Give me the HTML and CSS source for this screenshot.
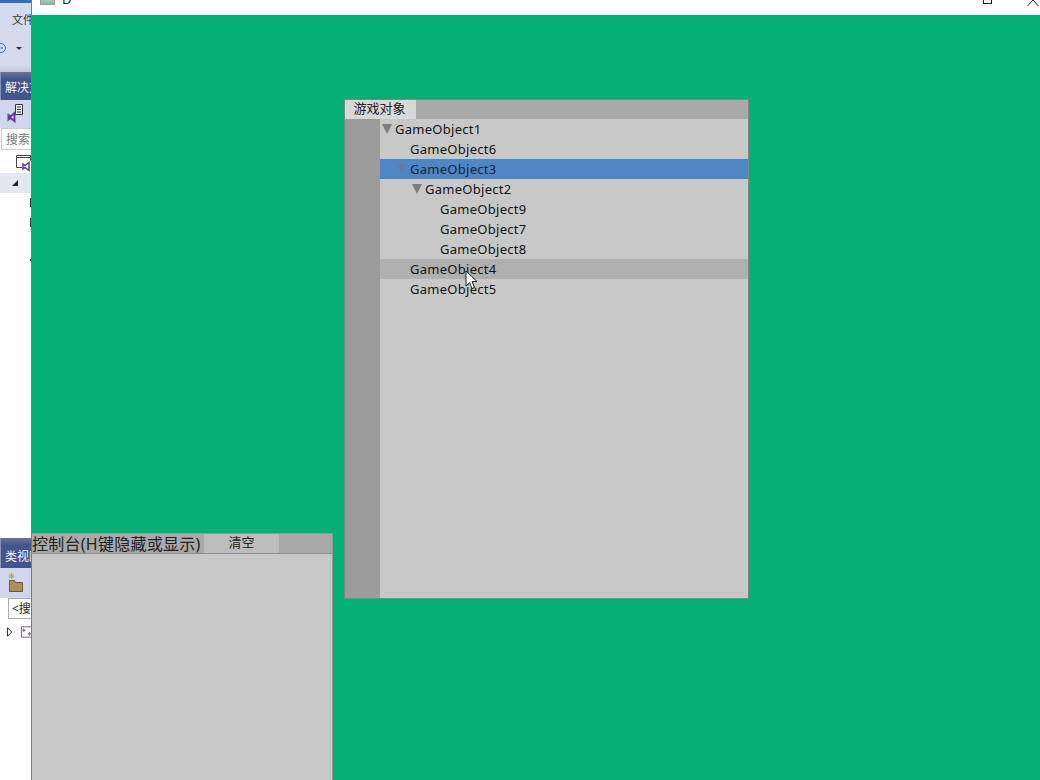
FILE: index.html
```html
<!DOCTYPE html>
<html lang="zh">
<head>
<meta charset="utf-8">
<title>Game</title>
<link rel="stylesheet" href="styles.css">
</head>
<body>
<div class="ide">
  <div class="ide-top"></div>
  <div class="ide-menu"><span class="menu-text">文件</span></div>
  <div class="ide-tools">
    <svg class="i-back" width="8" height="12" viewBox="0 0 8 12"><circle cx="1" cy="6" r="4.500" fill="none" stroke="#3a6ea5"/><path d="M-1 6h4" stroke="#3a6ea5"/></svg>
    <svg class="i-caret" width="6" height="4" viewBox="0 0 6 4"><path d="M0 0h6L3 3z" fill="#333"/></svg>
  </div>
  <div class="pane-title"><span>解决方</span></div>
  <div class="pane-tools">
    <svg width="20" height="20" viewBox="0 0 20 20"><path d="M9.500 1.500h7v10h-7z" fill="#e8ecf8" stroke="#333"/><path d="M11 4h4M11 6.500h4M11 9h4" stroke="#333"/><path d="M2.500 12l2 1.500 4-3.500v8l-4-3-2 1.500z" fill="none" stroke="#68389c" stroke-width="2"/></svg>
  </div>
  <div class="search"><span>搜索</span></div>
  <div class="tree-a">
    <svg width="20" height="18" viewBox="0 0 20 18"><path d="M1.500 1.500h14v2h-14zM1.500 3.500v10h6M15.500 3.500v3" fill="none" stroke="#444"/><path d="M8 10l2 1.500 4-3v8l-4-3-2 1.500z" fill="none" stroke="#68389c" stroke-width="1.500"/></svg>
  </div>
  <div class="tree-b"><svg width="8" height="8" viewBox="0 0 8 8"><path d="M7 1v6H1z" fill="#222"/></svg></div>
  <div class="tree-c"><i></i><i></i><i class="dash"></i></div>
  <div class="class-view">
    <div class="pane-title cv-title"><span>类视图</span></div>
    <div class="cv-tools">
      <svg width="20" height="22" viewBox="0 0 20 22"><path d="M2.500 8.500h5l1 2h7v9h-13z" fill="#ab9159" stroke="#6d5a36"/><path d="M4.500 1v6M1.500 4h6M2.500 2l4 4M6.500 2l-4 4" stroke="#c9a13a"/></svg>
    </div>
    <div class="cv-search"><span>&lt;搜</span></div>
    <div class="cv-tree">
      <svg width="6" height="10" viewBox="0 0 6 10"><path d="M.500.500l4.500 4.500-4.500 4.500z" fill="#fff" stroke="#222"/></svg>
      <svg width="12" height="12" viewBox="0 0 12 12"><path d="M.500.500h11v11H.500z" fill="#fff" stroke="#666"/><path d="M3 2v4M1 4h4" stroke="#8c4a9c"/><path d="M9 6v4M7 8h4" stroke="#8c4a9c"/></svg>
    </div>
  </div>
</div>

<div class="game">
  <div class="titlebar">
    <div class="app-icon"></div>
    <span class="app-name">D</span>
    <div class="max-btn"></div>
    <svg class="close-btn" width="12" height="6" viewBox="0 0 12 6"><path d="M.500 6L6 0M6 0l5.500 6" fill="none" stroke="#222"/></svg>
  </div>
  <div class="stage">
    <section class="objects">
      <div class="tabs"><div class="tab">游戏对象</div></div>
      <div class="obj-body">
        <div class="gutter"></div>
        <ul class="tree">
          <li class="row lv0"><svg class="arrow" width="10" height="10" viewBox="0 0 10 10"><path d="M0 0h10L5 10z"/></svg>GameObject1</li>
          <li class="row lv1">GameObject6</li>
          <li class="row lv1 selected"><svg class="arrow" width="10" height="10" viewBox="0 0 10 10"><path d="M0 0h10L5 10z"/></svg>GameObject3</li>
          <li class="row lv2"><svg class="arrow" width="10" height="10" viewBox="0 0 10 10"><path d="M0 0h10L5 10z"/></svg>GameObject2</li>
          <li class="row lv3">GameObject9</li>
          <li class="row lv3">GameObject7</li>
          <li class="row lv3">GameObject8</li>
          <li class="row lv1 hover">GameObject4</li>
          <li class="row lv1">GameObject5</li>
        </ul>
      </div>
      <svg class="cursor" width="13" height="20" viewBox="0 0 13 20"><path d="M1 1v15l3.500-3.500 2.500 6 2.500-1-2.500-6h5z" fill="#fff" stroke="#222" stroke-width="1"/></svg>
    </section>
    <section class="console">
      <div class="console-head">
        <div class="console-title">控制台(H键隐藏或显示)</div>
        <button class="clear">清空</button>
      </div>
    </section>
  </div>
</div>
</body>
</html>
```
FILE: styles.css
```css
* { box-sizing: border-box; }
html, body { margin: 0; padding: 0; height: 100%; overflow: hidden; }
body {
  position: relative;
  width: 1040px;
  height: 780px;
  font-family: "Noto Sans", "Noto Sans CJK SC", sans-serif;
  background: #fff;
  color: #1a1a1a;
}

/* Background IDE window, mostly covered */
.ide {
  position: absolute;
  left: 0;
  top: 0;
  width: 32px;
  height: 780px;
  overflow: hidden;
  display: flex;
  flex-direction: column;
  background: #fff;
}
.ide-top { height: 3px; background: #2f6fb5; flex: none; }
.ide-menu {
  height: 31px;
  flex: none;
  background: #d5dbee;
  font-size: 11px;
  line-height: 34px;
  padding-left: 12px;
  white-space: nowrap;
  color: #333;
}
.ide-tools {
  height: 38px;
  flex: none;
  background: linear-gradient(#d5dbee 80%, #c3c8d8);
  display: flex;
  align-items: flex-start;
  padding-top: 8px;
  gap: 5px;
}
.i-back { flex: none; }
.i-caret { flex: none; margin-top: 5px; margin-left: 3px; }
.pane-title {
  height: 28px;
  flex: none;
  background: linear-gradient(#6a7499, #43558f 25%, #43558f);
  color: #f2f4fa;
  font-size: 12px;
  line-height: 32px;
  padding-left: 4px;
  white-space: nowrap;
  border-left: 1px solid #8a93b8;
}
.pane-tools {
  height: 28px;
  flex: none;
  background: #cfd6ee;
  padding: 3px 0 0 6px;
}
.search {
  height: 22px;
  flex: none;
  background: #fff;
  border: 1px solid #ccc;
  border-right: 0;
  margin-left: 1px;
  font-size: 12px;
  line-height: 22px;
  padding-left: 4px;
  color: #777;
  white-space: nowrap;
}
.tree-a { height: 23px; flex: none; padding: 4px 0 0 15px; background: #fff; }
.tree-b { height: 20px; flex: none; background: #e4e7f0; padding: 6px 0 0 11px; line-height: 0; }
.tree-c {
  height: 345px;
  flex: none;
  background: #fff;
}
.tree-c i {
  display: block;
  width: 2px;
  height: 9px;
  margin: 0 0 11px 30px;
  background: #333;
}
.tree-c i:first-child { margin-top: 5px; }
.tree-c .dash { height: 2px; margin-top: 32px; }
.class-view { flex: 1; display: flex; flex-direction: column; background: #fff; }
.cv-title {
  height: 30px;
  line-height: 38px;
}
.cv-tools { height: 30px; flex: none; background: #cfd6ee; padding: 4px 0 0 7px; }
.cv-search {
  height: 21px;
  flex: none;
  margin-left: 8px;
  background: #fff;
  border: 1px solid #aab;
  border-right: 0;
  font-size: 12px;
  line-height: 19px;
  padding-left: 3px;
  white-space: nowrap;
}
.cv-tree { display: flex; align-items: center; gap: 8px; padding: 7px 0 0 7px; }

/* Game window */
.game {
  position: absolute;
  left: 31px;
  top: -15px;
  width: 1009px;
  height: 795px;
  display: flex;
  flex-direction: column;
  border-left: 1px solid #6f7f80;
}
.titlebar {
  height: 30px;
  flex: none;
  background: #fff;
  position: relative;
  overflow: hidden;
}
.app-icon {
  position: absolute;
  left: 8px;
  top: 7px;
  width: 15px;
  height: 13px;
  background: linear-gradient(#cfe3d8, #8eb8a4);
  border: 1px solid #999;
}
.app-name {
  position: absolute;
  left: 30px;
  top: 4px;
  font-size: 13px;
  line-height: 20px;
  color: #222;
}
.max-btn {
  position: absolute;
  left: 951px;
  top: 11px;
  width: 9px;
  height: 8px;
  border: 1px solid #222;
}
.close-btn { position: absolute; left: 995px; top: 15px; }
.stage {
  flex: 1;
  background: #05b077;
  position: relative;
}

.objects {
  position: absolute;
  left: 312px;
  top: 84px;
  width: 405px;
  height: 500px;
  border: 1px solid #7c8a86;
  background: #c8c8c8;
  display: flex;
  flex-direction: column;
}
.tabs { height: 19px; flex: none; background: #a9a9a9; display: flex; }
.tab {
  width: 71px;
  background: #d8d8d8;
  font-size: 13px;
  line-height: 17px;
  padding-right: 2px;
  text-align: center;
  color: #222;
}
.obj-body { flex: 1; display: flex; min-height: 0; }
.gutter { width: 35px; flex: none; background: #9b9b9b; }
.tree { flex: 1; margin: 0; padding: 0; list-style: none; }
.row {
  height: 20px;
  display: flex;
  align-items: center;
  font-size: 13px;
  line-height: 20px;
  color: #141414;
  letter-spacing: 0.28px;
}
.arrow { flex: none; margin-right: 3px; fill: #7d7d7d; }
.lv0 { padding-left: 2px; }
.lv1 { padding-left: 30px; }
.lv2 { padding-left: 32px; }
.lv3 { padding-left: 60px; }
.selected { background: #4f86c6; color: #0e2440; padding-left: 17px; }
.selected .arrow { fill: #5f7fa8; }
.hover { background: #afafaf; }
.cursor { position: absolute; left: 120px; top: 170px; }

.console {
  position: absolute;
  left: 0;
  top: 518px;
  width: 301px;
  height: 262px;
  background: #c8c8c8;
  border-right: 1px solid #8a9a94;
  border-top: 1px solid #8a9a94;
}
.console-head {
  height: 20px;
  display: flex;
  background: #a9a9a9;
  border-bottom: 1px solid #8c8c8c;
}
.console-title {
  width: 172px;
  flex: none;
  font-size: 16px;
  line-height: 21px;
  letter-spacing: 0.25px;
  white-space: nowrap;
  color: #222;
}
.clear {
  width: 75px;
  margin: 0;
  padding: 0 0 2px;
  border: 0;
  background: #bdbdbd;
  font: inherit;
  font-size: 13px;
  line-height: 17px;
  color: #222;
}
```
